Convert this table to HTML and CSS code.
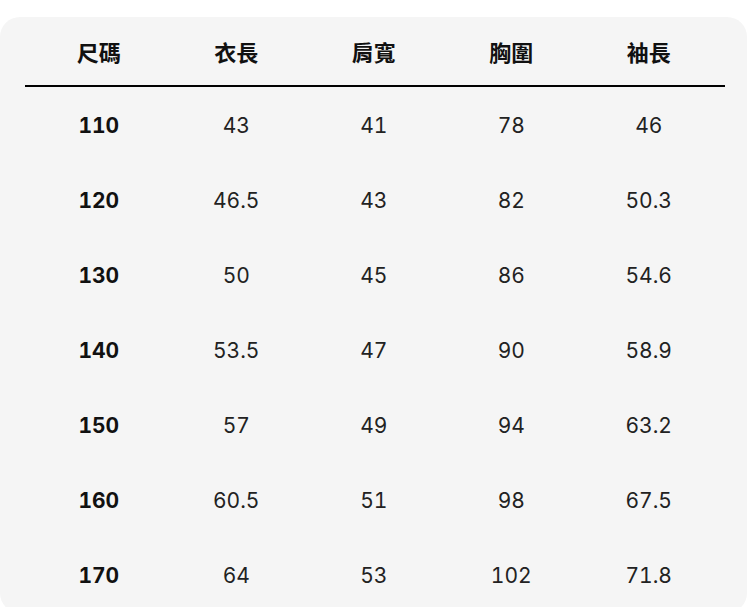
FILE: index.html
```html
<!DOCTYPE html>
<html lang="zh-Hant">
<head>
<meta charset="utf-8">
<title>尺碼表</title>
<link rel="stylesheet" href="styles.css">
</head>
<body>
<div class="card">
  <div class="table">
    <div class="row head">
      <div class="cell">尺碼</div><div class="cell">衣長</div><div class="cell">肩寬</div><div class="cell">胸圍</div><div class="cell">袖長</div>
    </div>
    <div class="row"><div class="cell size">110</div><div class="cell">43</div><div class="cell">41</div><div class="cell">78</div><div class="cell">46</div></div>
    <div class="row"><div class="cell size">120</div><div class="cell">46.5</div><div class="cell">43</div><div class="cell">82</div><div class="cell">50.3</div></div>
    <div class="row"><div class="cell size">130</div><div class="cell">50</div><div class="cell">45</div><div class="cell">86</div><div class="cell">54.6</div></div>
    <div class="row"><div class="cell size">140</div><div class="cell">53.5</div><div class="cell">47</div><div class="cell">90</div><div class="cell">58.9</div></div>
    <div class="row"><div class="cell size">150</div><div class="cell">57</div><div class="cell">49</div><div class="cell">94</div><div class="cell">63.2</div></div>
    <div class="row"><div class="cell size">160</div><div class="cell">60.5</div><div class="cell">51</div><div class="cell">98</div><div class="cell">67.5</div></div>
    <div class="row"><div class="cell size">170</div><div class="cell">64</div><div class="cell">53</div><div class="cell">102</div><div class="cell">71.8</div></div>
  </div>
</div>
</body>
</html>
```
FILE: styles.css
```css
html, body {
  margin: 0;
  padding: 0;
  background: #ffffff;
}
body {
  padding-top: 17px;
  overflow: hidden;
}
.card {
  width: 747px;
  height: 596px;
  background: #f5f5f5;
  border-radius: 20px;
  box-sizing: border-box;
  padding: 0 22px 0 25px;
}
.table {
  width: 700px;
}
.row {
  display: grid;
  grid-template-columns: repeat(5, 137.5px);
  padding-left: 5px;
  height: 75px;
  align-items: center;
  font-family: "Inter", "Noto Sans", sans-serif;
  font-variant-numeric: tabular-nums;
  font-size: 21px;
  color: #222222;
}
.row.head {
  height: 68px;
  margin-bottom: 1px;
  border-bottom: 2px solid #000;
  font-family: "Noto Sans CJK TC", "Noto Sans CJK SC", sans-serif;
  font-weight: 700;
  font-size: 22px;
  color: #111;
}
.row.head .cell {
  padding-bottom: 1px;
}
.cell {
  text-align: center;
}
.cell.size {
  font-weight: 700;
  color: #111;
}
```
